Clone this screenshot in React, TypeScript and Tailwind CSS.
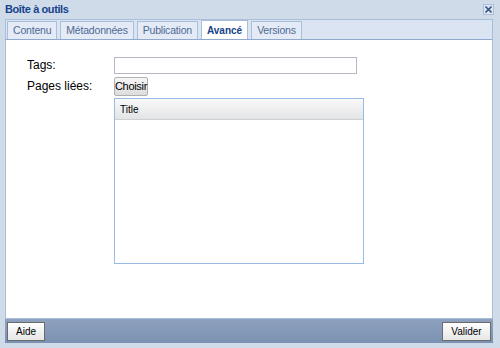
const tabs = ['Contenu', 'Métadonnées', 'Publication', 'Avancé', 'Versions']

const App = () => {
  return (
    <div className="w-[500px] h-[348px] bg-[#d0dbea] flex flex-col font-['Liberation_Sans',Arial,sans-serif] text-[12px] text-black">
      <div className="h-[19px] flex items-center justify-between pl-[5px] pr-[6px]">
        <span className="text-[11px] font-bold tracking-[-0.4px] text-[#15428b]">Boîte à outils</span>
        <span className="w-[11px] h-[11px] flex items-center justify-center border border-[#a9bfd9] bg-[#dde6f3]">
          <svg width="7" height="7" viewBox="0 0 7 7">
            <path d="M0.5 0.5 L6.5 6.5 M6.5 0.5 L0.5 6.5" stroke="#3d5a86" strokeWidth="1.6" />
          </svg>
        </span>
      </div>
      <div className="flex-1 flex flex-col pl-[5px] pr-[7px]">
        <div className="h-[20px] border border-b-0 border-[#a9bfd9] bg-[#dbe4f2] flex items-end gap-[3px] pl-[1px]">
          {tabs.map((t) => (
            <div
              key={t}
              className={
                t === 'Avancé'
                  ? 'h-[19px] px-[5px] flex items-center bg-white border border-b-0 border-[#a9bfd9] text-[10px] font-bold text-[#15428b]'
                  : 'h-[18px] px-[5px] flex items-center bg-[#e4ebf6] border border-b-0 border-[#a9bfd9] text-[10.5px] tracking-[-0.2px] text-[#4d6a94]'
              }
            >
              {t}
            </div>
          ))}
        </div>
        <div className="flex-1 bg-white border border-[#a9bfd9] border-t-[#8fa9cc] pt-[16px] pl-[21px]">
          <div className="flex items-center h-[18px]">
            <span className="w-[87px]">Tags:</span>
            <div className="w-[243px] h-[17px] border border-[#b5b8c8] bg-white" />
          </div>
          <div className="flex items-center h-[18px] mt-[3px]">
            <span className="w-[87px]">Pages liées:</span>
            <div className="h-[19px] w-[34px] flex items-center justify-center border border-[#b0b0b0] rounded-[2px] bg-gradient-to-b from-[#f6f6f6] to-[#dddddd] text-[11px] tracking-[-0.3px]">
              Choisir
            </div>
          </div>
          <div className="ml-[87px] mt-[3px] w-[250px] h-[166px] border border-[#99bbe8] flex flex-col">
            <div className="h-[21px] flex items-center pl-[5px] text-[10px] border-b border-[#d0d0d0] bg-gradient-to-b from-[#f9f9f9] to-[#e3e4e6]">
              Title
            </div>
            <div className="flex-1 bg-white" />
          </div>
        </div>
        <div className="h-[24px] bg-gradient-to-b from-[#8ea2bf] to-[#7b91b1] flex items-center justify-between px-[2px] mb-[5px]">
          <div className="h-[19px] w-[38px] flex items-center justify-center border border-[#6b6b6b] bg-gradient-to-b from-white to-[#e6e6e6] text-[10px]">
            Aide
          </div>
          <div className="h-[19px] w-[49px] flex items-center justify-center border border-[#6b6b6b] bg-gradient-to-b from-white to-[#e6e6e6] text-[10px]">
            Valider
          </div>
        </div>
      </div>
    </div>
  )
}

export default App
